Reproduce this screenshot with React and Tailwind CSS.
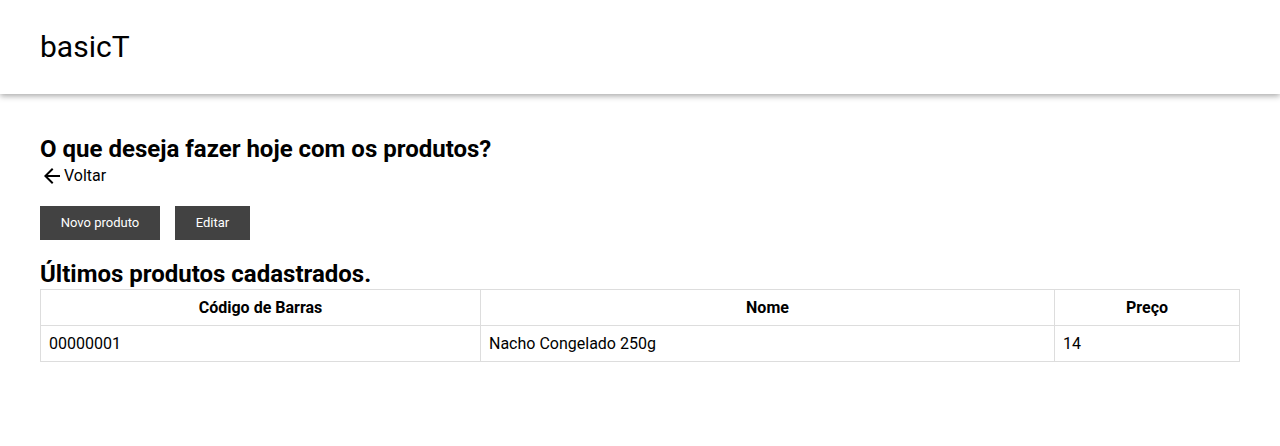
const produtos = [{ codigo: '00000001', nome: 'Nacho Congelado 250g', preco: 14 }];

function ArrowBack() {
  return (
    <svg viewBox="0 0 24 24" className="h-6 w-6" fill="currentColor">
      <path d="M20 11H7.83l5.59-5.59L12 4l-8 8 8 8 1.41-1.41L7.83 13H20v-2z" />
    </svg>
  );
}

export default function App() {
  return (
    <div className="min-h-[446px] bg-white text-black" style={{ fontFamily: 'Roboto, "Noto Sans", sans-serif' }}>
      <header className="flex h-[94px] items-center bg-white px-10 shadow-[0_2px_6px_rgba(0,0,0,0.35)]">
        <span className="text-[30px] leading-none">basicT</span>
      </header>

      <main className="px-10 pt-[42px]">
        <h1 className="text-2xl font-bold leading-[26px]">O que deseja fazer hoje com os produtos?</h1>
        <a href="#" className="mt-[2px] flex items-center text-base leading-6">
          <ArrowBack />
          Voltar
        </a>

        <div className="mt-[18px] flex gap-[15px]">
          <button className="h-[34px] w-[120px] bg-[#424242] text-[13px] text-white">Novo produto</button>
          <button className="h-[34px] w-[75px] bg-[#424242] text-[13px] text-white">Editar</button>
        </div>

        <h2 className="mt-[20px] text-2xl font-bold leading-[29px]">Últimos produtos cadastrados.</h2>
        <table className="w-full border-collapse text-base">
          <thead>
            <tr className="h-[36px]">
              <th className="w-[440px] border border-[#dddddd] font-bold">Código de Barras</th>
              <th className="w-[574px] border border-[#dddddd] font-bold">Nome</th>
              <th className="border border-[#dddddd] font-bold">Preço</th>
            </tr>
          </thead>
          <tbody>
            {produtos.map(p => (
              <tr key={p.codigo} className="h-[36px]">
                <td className="border border-[#dddddd] px-2">{p.codigo}</td>
                <td className="border border-[#dddddd] px-2">{p.nome}</td>
                <td className="border border-[#dddddd] px-2">{p.preco}</td>
              </tr>
            ))}
          </tbody>
        </table>
      </main>
    </div>
  );
}
